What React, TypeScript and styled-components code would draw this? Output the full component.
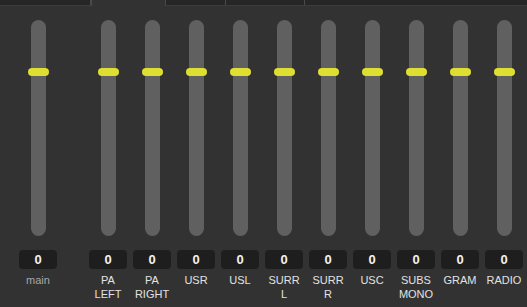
import React from "react";
import styled, { createGlobalStyle } from "styled-components";

const GlobalStyle = createGlobalStyle`
  html, body {
    margin: 0;
    padding: 0;
    background: #323232;
    overflow: hidden;
  }
  body {
    font-family: "Liberation Sans", Arial, sans-serif;
  }
`;

const Page = styled.div`
  width: 527px;
  height: 307px;
  background: #323232;
  overflow: hidden;
`;

const TabBar = styled.div`
  display: flex;
  height: 5px;
  background: #262626;
  border-bottom: 1px solid #3c3c3c;
`;

const Tab = styled.div<{ $w: number; $active?: boolean }>`
  width: ${(p) => p.$w}px;
  flex: none;
  border-right: 1px solid #4a4a4a;
  background: ${(p) => (p.$active ? "#323232" : "transparent")};
  margin-bottom: ${(p) => (p.$active ? "-1px" : "0")};
  border-left: ${(p) => (p.$active ? "1px solid #4a4a4a" : "none")};
`;

const Mixer = styled.div`
  display: flex;
  padding: 14px 0 0 16px;
  gap: 26px;
`;

const Group = styled.div`
  display: flex;
`;

const Channel = styled.div`
  width: 44px;
  display: flex;
  flex-direction: column;
  align-items: center;
`;

const Track = styled.div`
  position: relative;
  width: 15px;
  height: 216px;
  border-radius: 8px;
  background: #606060;
`;

const Thumb = styled.div`
  position: absolute;
  left: -3px;
  top: 48px;
  width: 21px;
  height: 8px;
  border-radius: 4px;
  background: #dede33;
`;

const Value = styled.div`
  margin-top: 14px;
  width: 38px;
  height: 19px;
  border-radius: 4px;
  background: #1e1e1e;
  color: #f2f2f2;
  font-size: 13px;
  font-weight: 700;
  line-height: 19px;
  text-align: center;
`;

const Label = styled.div<{ $dim?: boolean }>`
  margin-top: 5px;
  font-size: 11px;
  line-height: 13.5px;
  text-align: center;
  white-space: pre-line;
  color: ${(p) => (p.$dim ? "#a8a8a8" : "#e2e2e2")};
`;

const channels = [
  "PA\nLEFT",
  "PA\nRIGHT",
  "USR",
  "USL",
  "SURR\nL",
  "SURR\nR",
  "USC",
  "SUBS\nMONO",
  "GRAM",
  "RADIO",
];

const Strip: React.FC<{ label: string; dim?: boolean }> = ({ label, dim }) => (
  <Channel>
    <Track>
      <Thumb />
    </Track>
    <Value>0</Value>
    <Label $dim={dim}>{label}</Label>
  </Channel>
);

const App: React.FC = () => {
  return (
    <Page>
      <GlobalStyle />
      <TabBar>
        <Tab $w={90} />
        <Tab $w={73} $active />
        <Tab $w={59} />
        <Tab $w={78} />
      </TabBar>
      <Mixer>
        <Group>
          <Strip label="main" dim />
        </Group>
        <Group>
          {channels.map((c) => (
            <Strip key={c} label={c} />
          ))}
        </Group>
      </Mixer>
    </Page>
  );
};

export default App;
